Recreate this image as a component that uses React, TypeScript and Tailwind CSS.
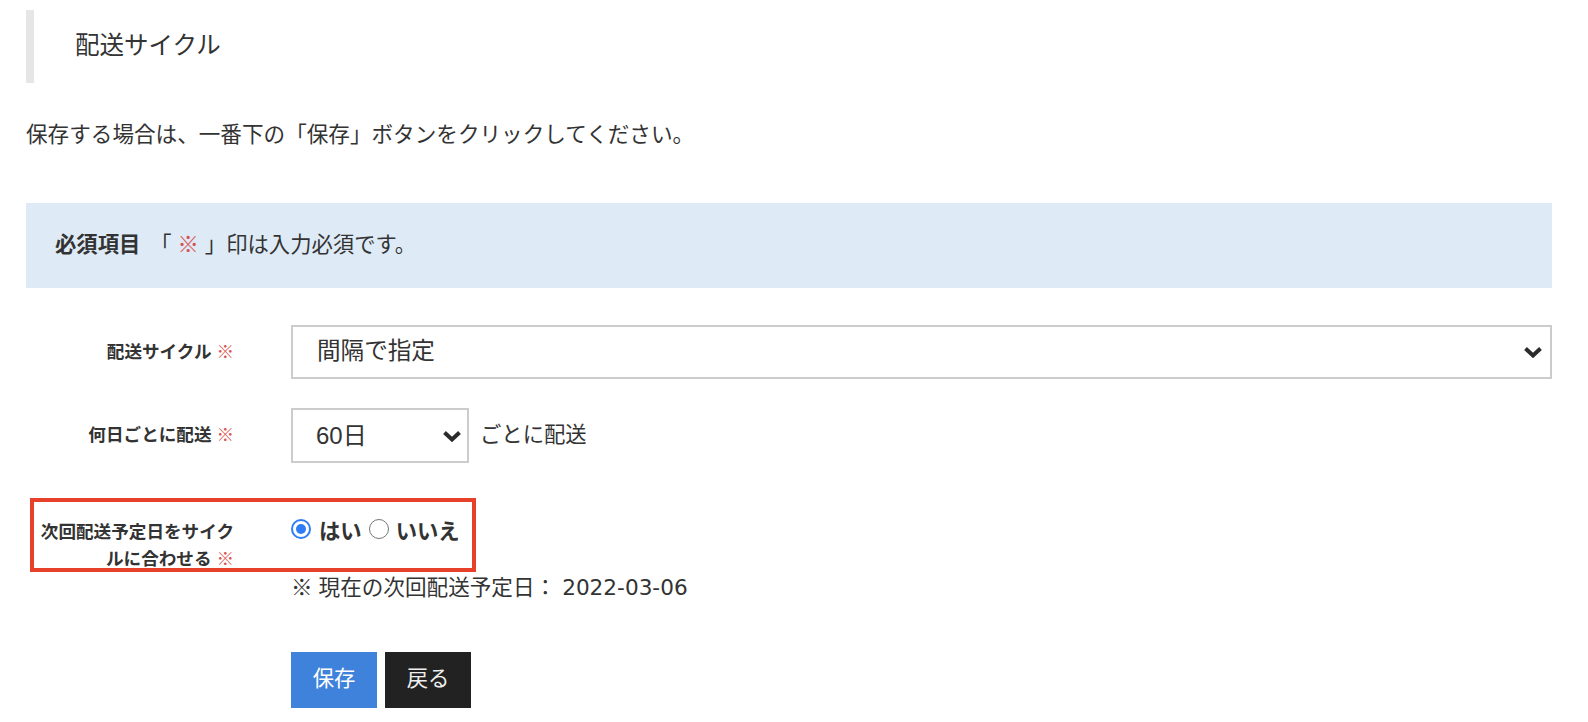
import React from 'react';

const Chevron = () => (
  <svg width="20" height="12" viewBox="0 0 20 12" fill="none">
    <path d="M2.5 2.5 L10 9.5 L17.5 2.5" stroke="#2b2b2b" strokeWidth="4" strokeLinejoin="miter" />
  </svg>
);

const Req = () => <span className="font-normal text-[#d9534f]"> ※</span>;

const Radio = ({ checked }: { checked?: boolean }) =>
  checked ? (
    <span className="w-5 h-5 rounded-full border-[2.5px] border-[#2f7df6] flex items-center justify-center shrink-0">
      <span className="w-[10px] h-[10px] rounded-full bg-[#2f7df6]" />
    </span>
  ) : (
    <span className="block w-5 h-5 rounded-full border border-[#767676] bg-white shrink-0" />
  );

export default function App() {
  return (
    <div
      className="min-h-screen bg-white pl-[26px] pr-[36px] pt-[10px] text-[#333333]"
      style={{ fontFamily: '"Liberation Sans", "Noto Sans CJK JP", sans-serif' }}
    >
      {/* Page title */}
      <div className="border-l-8 border-[#e6e6e6] h-[73px] flex items-center pl-[41px] text-[24.5px]">
        配送サイクル
      </div>

      <p className="mt-[36px] h-[32px] leading-[32px] text-[21.6px]">
        保存する場合は、一番下の「保存」ボタンをクリックしてください。
      </p>

      {/* Required notice */}
      <div className="mt-[52px] h-[85px] bg-[#deebf7] flex items-center px-[29px] text-[21.33px]">
        <span className="font-bold">必須項目</span>
        <span className="ml-[10px]">「 <span className="text-[#d9534f]">※</span> 」印は入力必須です。</span>
      </div>

      {/* Delivery cycle */}
      <div className="mt-[37px] grid grid-cols-[208px_1fr] gap-x-[57px] items-center">
        <div className="text-right font-bold text-[17.6px] pl-2">
          配送サイクル<Req />
        </div>
        <div className="h-[54px] border-2 border-[#cccccc] flex items-center justify-between pl-[24px] pr-[7px] text-[23.6px]">
          <span>間隔で指定</span>
          <Chevron />
        </div>
      </div>

      {/* Interval */}
      <div className="mt-[29px] grid grid-cols-[208px_1fr] gap-x-[57px] items-center">
        <div className="text-right font-bold text-[17.6px] pl-2">
          何日ごとに配送<Req />
        </div>
        <div className="flex items-center">
          <div className="w-[178px] h-[55px] border-2 border-[#cccccc] flex items-center justify-between pl-[23px] pr-[5px] text-[24px]">
            <span>60日</span>
            <Chevron />
          </div>
          <span className="ml-[11px] text-[21.33px]">ごとに配送</span>
        </div>
      </div>

      {/* Align next date */}
      <div className="relative mt-[56px] grid grid-cols-[208px_1fr] gap-x-[57px] items-start">
        <div className="text-right font-bold text-[17.6px] leading-[27px] pl-2">
          次回配送予定日をサイクルに合わせる<Req />
        </div>
        <div>
          <div className="flex items-start h-[27px] text-[21.33px] leading-[27px] font-bold">
            <Radio checked />
            <span className="ml-[8px]">はい</span>
            <span className="ml-[7px]">
              <Radio />
            </span>
            <span className="ml-[7px]">いいえ</span>
          </div>
          <p className="mt-[26px] h-[32px] leading-[32px] text-[21.6px]">
            ※ 現在の次回配送予定日：{' '}
            <span style={{ fontFamily: '"DejaVu Sans", sans-serif' }}>2022-03-06</span>
          </p>
        </div>
        {/* annotation frame */}
        <div className="absolute -top-[21px] left-[4px] w-[446px] h-[74px] border-4 border-[#e8412b] pointer-events-none" />
      </div>

      {/* Actions */}
      <div className="mt-[48px] grid grid-cols-[208px_1fr] gap-x-[57px]">
        <div />
        <div className="flex gap-2">
          <button className="w-[86px] h-[56px] bg-[#3f82dc] text-white text-[21.33px]">保存</button>
          <button className="w-[86px] h-[56px] bg-[#222222] text-[#eeeeee] text-[21.33px]">戻る</button>
        </div>
      </div>
    </div>
  );
}
